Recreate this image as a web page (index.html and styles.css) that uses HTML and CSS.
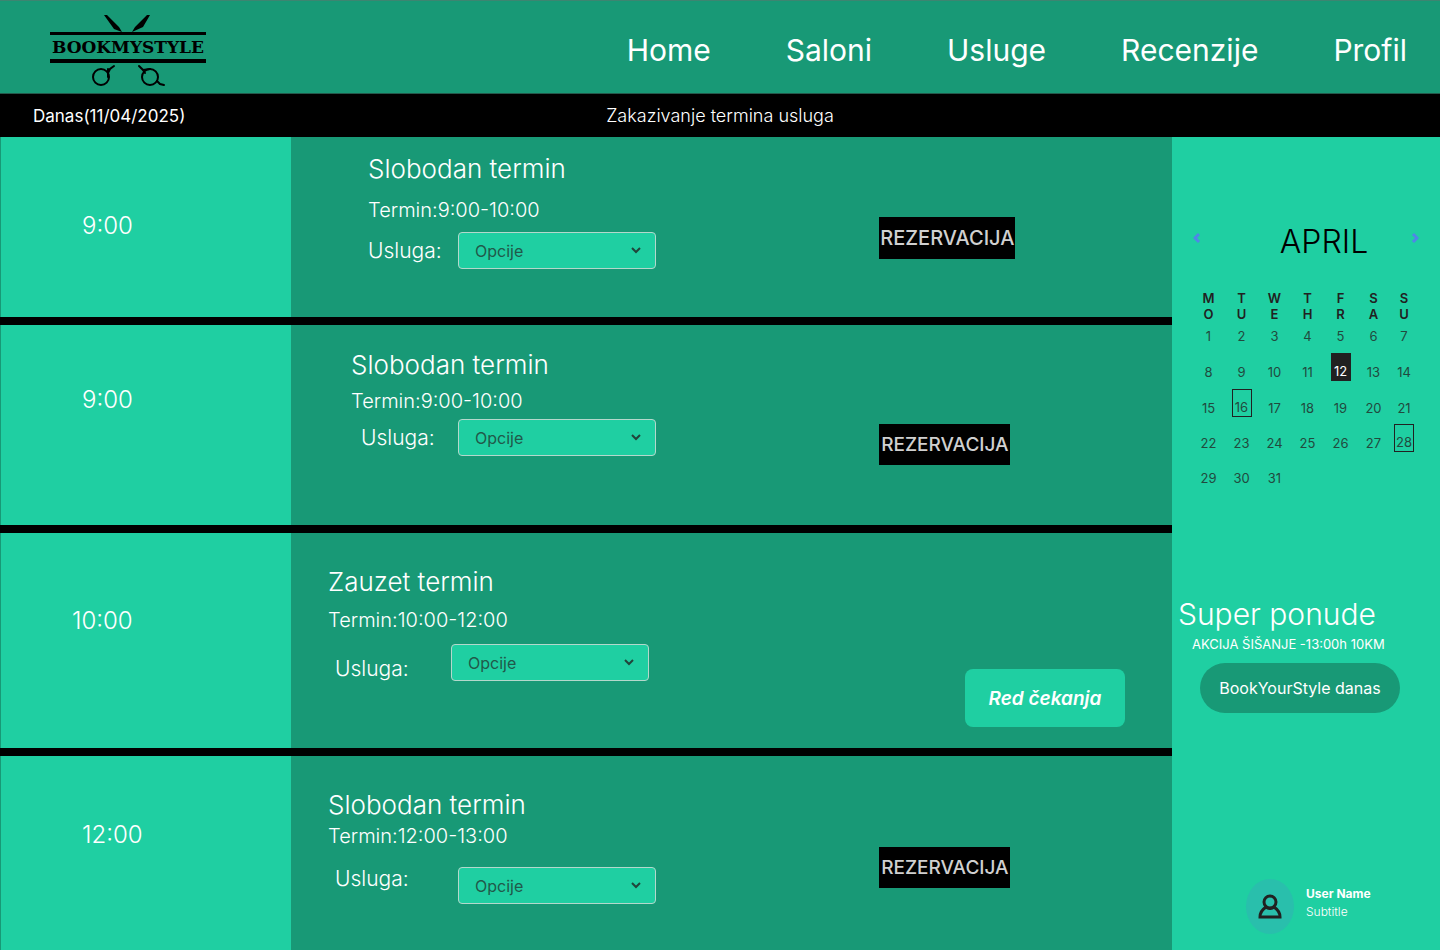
FILE: index.html
```html
<!DOCTYPE html>
<html lang="bs">
<head>
<meta charset="utf-8">
<meta name="viewport" content="width=device-width, initial-scale=1">
<title>BookMyStyle – Zakazivanje termina</title>
<link rel="stylesheet" href="styles.css">
</head>
<body>
<header class="topbar">
  <a class="logo" href="#" aria-label="BookMyStyle">
    <svg width="158" height="74" viewBox="0 0 158 74">
      <path d="M55 2l3 0 12 12 3 5-8-3zM98 2l3 0-7 12-11 5 3-5z"/>
      <path d="M1 19h156v3H1zM1 46h156v4H1z"/>
      <g fill="none" stroke="#000" stroke-width="2" stroke-linecap="round">
        <circle cx="52" cy="64" r="8"/>
        <circle cx="101" cy="64" r="8"/>
        <path d="M65 53l-4 3-2 4M59 56v8M90 53l4 4 2 3M94 57l7-1M108 68l3 3 4 1"/>
      </g>
      <text class="logo-text" x="79" y="40" text-anchor="middle">BOOKMYSTYLE</text>
    </svg>
  </a>
  <nav class="nav">
    <a href="#">Home</a>
    <a href="#">Saloni</a>
    <a href="#">Usluge</a>
    <a href="#">Recenzije</a>
    <a href="#">Profil</a>
  </nav>
</header>

<div class="subbar">
  <span class="today">Danas(11/04/2025)</span>
  <h1 class="page-title">Zakazivanje termina usluga</h1>
  <span></span>
</div>

<main class="layout">
  <section class="schedule">
    <article class="slot slot-a">
      <time class="slot-time">9:00</time>
      <div class="card">
        <div class="info">
          <h2 class="slot-title">Slobodan termin</h2>
          <p class="slot-range">Termin:9:00-10:00</p>
          <div class="service">
            <label class="service-label" for="s1">Usluga:</label>
            <div class="picker">
              <select id="s1"><option>Opcije</option></select>
              <svg class="chevron" width="10" height="7" viewBox="0 0 10 7"><path d="M1 1l4 4 4-4"/></svg>
            </div>
          </div>
        </div>
        <button class="reserve" type="button">REZERVACIJA</button>
      </div>
    </article>

    <article class="slot slot-b">
      <time class="slot-time">9:00</time>
      <div class="card">
        <div class="info">
          <h2 class="slot-title">Slobodan termin</h2>
          <p class="slot-range">Termin:9:00-10:00</p>
          <div class="service">
            <label class="service-label" for="s2">Usluga:</label>
            <div class="picker">
              <select id="s2"><option>Opcije</option></select>
              <svg class="chevron" width="10" height="7" viewBox="0 0 10 7"><path d="M1 1l4 4 4-4"/></svg>
            </div>
          </div>
        </div>
        <button class="reserve" type="button">REZERVACIJA</button>
      </div>
    </article>

    <article class="slot slot-c">
      <time class="slot-time">10:00</time>
      <div class="card">
        <div class="info">
          <h2 class="slot-title">Zauzet termin</h2>
          <p class="slot-range">Termin:10:00-12:00</p>
          <div class="service">
            <label class="service-label" for="s3">Usluga:</label>
            <div class="picker">
              <select id="s3"><option>Opcije</option></select>
              <svg class="chevron" width="10" height="7" viewBox="0 0 10 7"><path d="M1 1l4 4 4-4"/></svg>
            </div>
          </div>
        </div>
        <button class="queue" type="button">Red čekanja</button>
      </div>
    </article>

    <article class="slot slot-d">
      <time class="slot-time">12:00</time>
      <div class="card">
        <div class="info">
          <h2 class="slot-title">Slobodan termin</h2>
          <p class="slot-range">Termin:12:00-13:00</p>
          <div class="service">
            <label class="service-label" for="s4">Usluga:</label>
            <div class="picker">
              <select id="s4"><option>Opcije</option></select>
              <svg class="chevron" width="10" height="7" viewBox="0 0 10 7"><path d="M1 1l4 4 4-4"/></svg>
            </div>
          </div>
        </div>
        <button class="reserve" type="button">REZERVACIJA</button>
      </div>
    </article>
  </section>

  <aside class="sidebar">
    <div class="month">
      <button class="step" type="button" aria-label="Prethodni mjesec"><svg width="8" height="12" viewBox="0 0 8 12"><path d="M6 2L2 6l4 4"/></svg></button>
      <h2 class="month-name">APRIL</h2>
      <button class="step" type="button" aria-label="Sljedeći mjesec"><svg width="8" height="12" viewBox="0 0 8 12"><path d="M2 2l4 4-4 4"/></svg></button>
    </div>
    <table class="calendar">
      <thead>
        <tr><th>M<br>O</th><th>T<br>U</th><th>W<br>E</th><th>T<br>H</th><th>F<br>R</th><th>S<br>A</th><th>S<br>U</th></tr>
      </thead>
      <tbody>
        <tr><td>1</td><td>2</td><td>3</td><td>4</td><td>5</td><td>6</td><td>7</td></tr>
        <tr><td>8</td><td>9</td><td>10</td><td>11</td><td><span class="day day-active">12</span></td><td>13</td><td>14</td></tr>
        <tr><td>15</td><td><span class="day">16</span></td><td>17</td><td>18</td><td>19</td><td>20</td><td>21</td></tr>
        <tr><td>22</td><td>23</td><td>24</td><td>25</td><td>26</td><td>27</td><td><span class="day">28</span></td></tr>
        <tr><td>29</td><td>30</td><td>31</td><td></td><td></td><td></td><td></td></tr>
      </tbody>
    </table>

    <section class="promo">
      <h2 class="promo-title">Super ponude</h2>
      <p class="promo-text">AKCIJA ŠIŠANJE -13:00h 10KM</p>
      <button class="promo-button" type="button">BookYourStyle danas</button>
    </section>

    <div class="user">
      <span class="avatar">
        <svg width="24" height="26" viewBox="0 0 24 26"><circle cx="12" cy="8" r="6"/><path d="M2 23c0-5 3-8 6-10 2 2 6 2 8 0 3 2 6 5 6 10z"/></svg>
      </span>
      <div class="user-text">
        <p class="user-name">User Name</p>
        <p class="user-sub">Subtitle</p>
      </div>
    </div>
  </aside>
</main>
</body>
</html>
```
FILE: styles.css
```css
:root {
  --dark: #189976;
  --light: #1fcfa2;
  --ink: #212121;
}

* { box-sizing: border-box; }

body {
  margin: 0;
  min-height: 100vh;
  display: flex;
  flex-direction: column;
  background: #000;
  color: #fff;
  font-family: Inter, "Open Sans", sans-serif;
}

h1, h2, p { margin: 0; font-weight: 300; }

button { border: 0; padding: 0; font-family: inherit; cursor: pointer; }

.topbar {
  display: flex;
  align-items: center;
  justify-content: space-between;
  min-height: 94px;
  padding: 10px 33px 4px 49px;
  background: var(--dark);
  border-top: 1px solid #3d8571;
  border-bottom: 1px solid #24594b;
}

.logo svg { display: block; }

.logo-text {
  font-family: "DejaVu Serif", serif;
  font-weight: 700;
  font-size: 17px;
}

.nav { display: flex; gap: 75px; }

.nav a {
  color: #fff;
  font-size: 30px;
  line-height: 36px;
  text-decoration: none;
}

.subbar {
  display: grid;
  grid-template-columns: 1fr auto 1fr;
  align-items: center;
  min-height: 43px;
  padding: 0 33px;
}

.today { font-size: 17px; }

.page-title { font-size: 18px; }

.layout { flex: 1; display: flex; }

.schedule {
  flex: 1;
  display: flex;
  flex-direction: column;
  gap: 8px;
}

.slot {
  display: grid;
  grid-template-columns: 291px 1fr;
}

.slot-time {
  padding: var(--time-top) 0 0 81px;
  background: var(--light);
  border-left: 1px solid var(--dark);
  font-size: 24px;
  font-weight: 300;
  line-height: 32px;
}

.card {
  display: grid;
  grid-template-columns: 2fr 1fr;
  align-items: start;
  background: var(--dark);
}

.info { padding: var(--top) 0 0 var(--indent); }

.slot-title { font-size: 26px; line-height: 32px; }

.slot-range {
  margin: var(--range-gap) 0 var(--service-gap);
  font-size: 20px;
  line-height: 24px;
}

.service {
  display: flex;
  align-items: center;
  padding-left: var(--label-indent);
}

.service-label {
  width: var(--label-width);
  font-size: 21px;
  font-weight: 300;
  line-height: 24px;
}

.picker {
  display: grid;
  grid-template-columns: 1fr auto;
  align-items: center;
  width: 198px;
}

.picker select {
  grid-area: 1 / 1 / 2 / 3;
  appearance: none;
  width: 100%;
  height: 37px;
  padding: 0 16px;
  background: var(--light);
  border: 1px solid #b4d8cc;
  border-radius: 4px;
  color: #21594a;
  font-family: inherit;
  font-size: 16px;
}

.chevron {
  grid-area: 1 / 2;
  margin-right: 15px;
  pointer-events: none;
  fill: none;
  stroke: #21453b;
  stroke-width: 2;
}

.slot-a {
  min-height: 180px;
  --time-top: 73px;
  --top: 16px;
  --indent: 77px;
  --range-gap: 13px;
  --service-gap: 10px;
  --label-indent: 0px;
  --label-width: 90px;
}

.slot-b {
  min-height: 200px;
  --time-top: 59px;
  --top: 24px;
  --indent: 60px;
  --range-gap: 8px;
  --service-gap: 6px;
  --label-indent: 10px;
  --label-width: 97px;
}

.slot-c {
  min-height: 215px;
  --time-top: 72px;
  --top: 33px;
  --indent: 37px;
  --range-gap: 10px;
  --service-gap: 12px;
  --label-indent: 7px;
  --label-width: 116px;
}

.slot-d {
  flex: 1;
  --time-top: 63px;
  --top: 33px;
  --indent: 37px;
  --range-gap: 3px;
  --service-gap: 19px;
  --label-indent: 7px;
  --label-width: 123px;
}

.slot-c .slot-time { padding-left: 71px; }
.slot-c .service { align-items: flex-end; }
.slot-d .service { align-items: flex-start; }

.reserve {
  justify-self: start;
  width: 131px;
  height: 41px;
  margin: 99px 0 0 1px;
  background: #000;
  color: #d0d0d0;
  font-size: 19px;
  font-weight: 500;
}

.slot-a .reserve {
  width: 136px;
  height: 42px;
  margin-top: 80px;
  font-size: 20px;
}

.slot-d .reserve { margin-top: 91px; }

.queue {
  justify-self: end;
  width: 160px;
  height: 58px;
  margin: 136px 47px 0 0;
  background: var(--light);
  border-radius: 8px;
  color: #fff;
  font-size: 19px;
  font-style: italic;
  font-weight: 600;
}

.sidebar {
  flex: 0 0 268px;
  display: flex;
  flex-direction: column;
  padding: 85px 0 16px;
  background: var(--light);
}

.month {
  display: grid;
  grid-template-columns: 8px 1fr 8px;
  padding: 0 21px;
}

.step { height: 32px; background: none; }

.step svg {
  display: block;
  fill: none;
  stroke: #4f86e8;
  stroke-width: 3;
}

.month-name {
  padding-left: 36px;
  color: #000;
  font-size: 32px;
  line-height: 40px;
  text-align: center;
}

.calendar {
  table-layout: fixed;
  width: 226px;
  margin: 28px 0 0 20px;
  border-collapse: collapse;
  color: var(--ink);
  font-size: 13px;
  line-height: 18px;
  text-align: center;
}

.calendar th {
  width: 33px;
  padding: 0;
  font-weight: 600;
  line-height: 16px;
}

.calendar th:last-child { width: 28px; }

.calendar td {
  height: 36px;
  padding: 0;
  color: #214a3e;
  vertical-align: bottom;
}

.calendar tbody tr:first-child td { height: 23px; }

.calendar tbody tr:nth-child(n+4) td { height: 35px; }

.day {
  display: block;
  width: 20px;
  margin: 0 auto;
  padding-top: 8px;
  border: 1px solid var(--ink);
}

.day-active { background: var(--ink); color: #fff; }

.promo { padding: 107px 6px 0; }

.promo-title { font-size: 30px; line-height: 40px; }

.promo-text {
  padding-left: 14px;
  font-size: 13px;
  font-weight: 400;
  line-height: 20px;
}

.promo-button {
  display: block;
  width: 200px;
  height: 50px;
  margin: 9px 0 0 22px;
  background: var(--dark);
  border-radius: 25px;
  color: #fff;
  font-size: 16px;
}

.user {
  display: flex;
  align-items: center;
  gap: 12px;
  margin-top: auto;
  padding-left: 74px;
}

.avatar {
  display: grid;
  place-items: center;
  width: 48px;
  height: 55px;
  background: #29bfac;
  border-radius: 50%;
}

.avatar svg { fill: none; stroke: var(--ink); stroke-width: 3; }

.user-text { padding-bottom: 7px; }

.user-name { font-size: 12px; font-weight: 700; line-height: 18px; }

.user-sub { font-size: 12px; line-height: 18px; }
```
